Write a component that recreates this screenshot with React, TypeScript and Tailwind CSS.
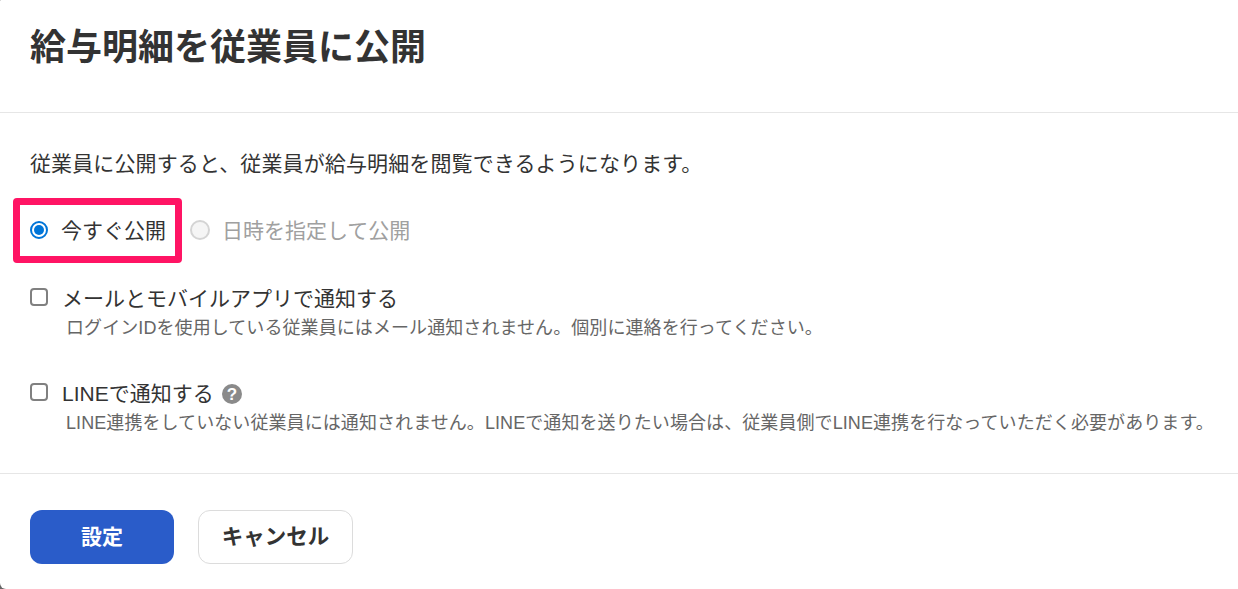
const font = { fontFamily: '"Liberation Sans","Noto Sans CJK JP",sans-serif' };

function Check({ label, hint, help }: { label: string; hint: string; help?: boolean }) {
  return (
    <div className="flex gap-[14px]">
      <span className="mt-[2px] box-border h-[18px] w-[18px] shrink-0 rounded-[4px] border-2 border-[#808080] bg-white" />
      <div>
        <div className="flex h-[26px] items-center text-[21px] leading-[26px] text-[#333333]">
          {label}
          {help && (
            <svg className="ml-[8px]" width="20" height="20" viewBox="0 0 20 20">
              <circle cx="10" cy="10" r="10" fill="#8a8a8a" />
              <text x="10" y="16" textAnchor="middle" fontSize="17" fontWeight="700" fill="#fff" fontFamily="Liberation Sans">?</text>
            </svg>
          )}
        </div>
        <div className="ml-[4px] mt-[5px] whitespace-nowrap text-[18px] leading-[22px] tracking-[0.08px] text-[#666666]">{hint}</div>
      </div>
    </div>
  );
}

export default function App() {
  return (
    <div className="h-[589px] w-[1238px] overflow-hidden bg-[#666666]" style={font}>
      <div className="flex h-full flex-col rounded-bl-[6px] rounded-tl-[1px] bg-white">
        <div className="flex h-[113px] items-start border-b border-[#e6e6e6] px-[30px] pt-[23px]">
          <h1 className="text-[36px] font-bold leading-[50px] text-[#333333]">給与明細を従業員に公開</h1>
        </div>
        <div className="h-[361px] border-b border-[#e6e6e6] px-[30px] pt-[36px]">
          <p className="text-[21px] leading-[30px] tracking-[0.12px] text-[#333333]">従業員に公開すると、従業員が給与明細を閲覧できるようになります。</p>
          <div className="relative mt-[37px] flex h-[30px] items-center text-[21px]">
            <span className="absolute -left-[17px] -top-[18px] h-[65px] w-[169px] rounded-[4px] border-[7px] border-[#ff1464]" />
            <span className="-mt-[2px] box-border flex h-[18px] w-[18px] items-center justify-center rounded-full border-2 border-[#0075d8] bg-white">
              <span className="h-[10px] w-[10px] rounded-full bg-[#0075d8]" />
            </span>
            <span className="ml-[13px] text-[#333333]">今すぐ公開</span>
            <span className="-mt-[2px] ml-[24px] box-border h-[20px] w-[20px] rounded-full border-2 border-[#d4d4d4] bg-[#f5f5f5]" />
            <span className="ml-[12px] text-[#a0a0a0]">日時を指定して公開</span>
          </div>
          <div className="mt-[40px]">
            <Check label="メールとモバイルアプリで通知する" hint="ログインIDを使用している従業員にはメール通知されません。個別に連絡を行ってください。" />
          </div>
          <div className="mt-[42px]">
            <Check help label="LINEで通知する" hint="LINE連携をしていない従業員には通知されません。LINEで通知を送りたい場合は、従業員側でLINE連携を行なっていただく必要があります。" />
          </div>
        </div>
        <div className="flex items-start gap-[24px] px-[30px] pt-[36px]">
          <button className="h-[54px] w-[144px] rounded-[12px] bg-[#2a5cc9] text-[21px] font-bold text-white">設定</button>
          <button className="h-[54px] w-[155px] rounded-[12px] border border-[#dcdcdc] bg-white text-[21.5px] font-bold text-[#333333]">キャンセル</button>
        </div>
      </div>
    </div>
  );
}
